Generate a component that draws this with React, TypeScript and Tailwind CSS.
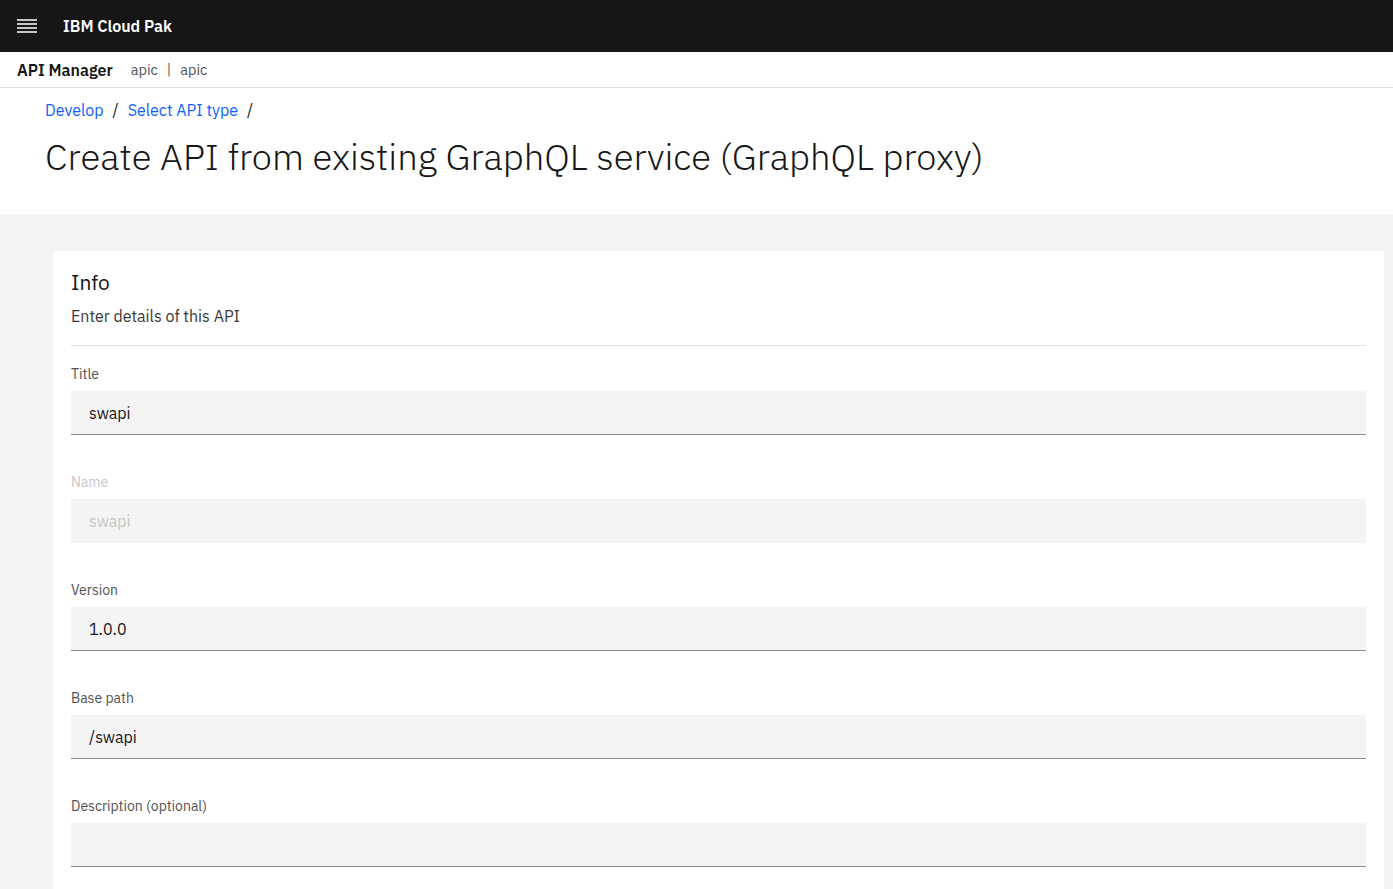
import React from "react";

const font = { fontFamily: "'IBM Plex Sans', Inter, 'Noto Sans', 'Liberation Sans', sans-serif" };

function Field({ label, value, disabled }: { label: string; value: string; disabled?: boolean }) {
  return (
    <div className="mb-[38px]">
      <div className={`text-[14px] leading-[18px] mb-[8px] ${disabled ? "text-[#c6c6c6]" : "text-[#525252]"}`}>{label}</div>
      <div
        className={`h-[44px] bg-[#f4f4f4] flex items-center pl-[18px] text-[16px] ${
          disabled ? "text-[#c6c6c6]" : "text-[#161616] border-b border-[#8d8d8d]"
        }`}
      >
        {value}
      </div>
    </div>
  );
}

export default function App() {
  return (
    <div className="min-h-[889px] bg-[#f4f4f4] flow-root" style={font}>
      <header className="h-[52px] bg-[#161616] flex items-center">
        <div className="w-[20px] ml-[17px] flex flex-col gap-[2px]">
          <div className="h-[2px] bg-[#c6c6c6]" />
          <div className="h-[2px] bg-[#c6c6c6]" />
          <div className="h-[2px] bg-[#c6c6c6]" />
          <div className="h-[2px] bg-[#c6c6c6]" />
        </div>
        <span className="ml-[26px] text-white text-[16px] font-semibold">IBM Cloud Pak</span>
      </header>
      <div className="h-[36px] bg-white border-b border-[#e0e0e0] flex items-center px-[17px]">
        <span className="text-[16px] font-semibold text-[#161616]">API Manager</span>
        <span className="ml-[18px] text-[14.5px] text-[#525252]">apic</span>
        <span className="mx-[9px] text-[14px] text-[#525252]">|</span>
        <span className="text-[14.5px] text-[#525252]">apic</span>
      </div>
      <div className="bg-white h-[126px] px-[45px] pt-[11px]">
        <div className="flex items-center text-[16px] leading-[22px] text-[#0f62fe]">
          <span>Develop</span>
          <span className="mx-[9px] text-[#161616]">/</span>
          <span>Select API type</span>
          <span className="mx-[9px] text-[#161616]">/</span>
        </div>
        <h1 className="mt-[14px] text-[36.5px] leading-[44px] font-light text-[#161616]">
          Create API from existing GraphQL service (GraphQL proxy)
        </h1>
      </div>
      <div className="pl-[53px] pr-[9px] pt-[37px]">
        <div className="bg-white px-[18px] pt-[17px] flow-root">
          <div className="text-[21px] leading-[28px] text-[#161616]">Info</div>
          <div className="mt-[10px] text-[16px] leading-[20px] text-[#393939]">Enter details of this API</div>
          <div className="mt-[19px] mb-[19px] h-px bg-[#e0e0e0]" />
          <Field label="Title" value="swapi" />
          <Field label="Name" value="swapi" disabled />
          <Field label="Version" value="1.0.0" />
          <Field label="Base path" value="/swapi" />
          <Field label="Description (optional)" value="" />
        </div>
      </div>
    </div>
  );
}
